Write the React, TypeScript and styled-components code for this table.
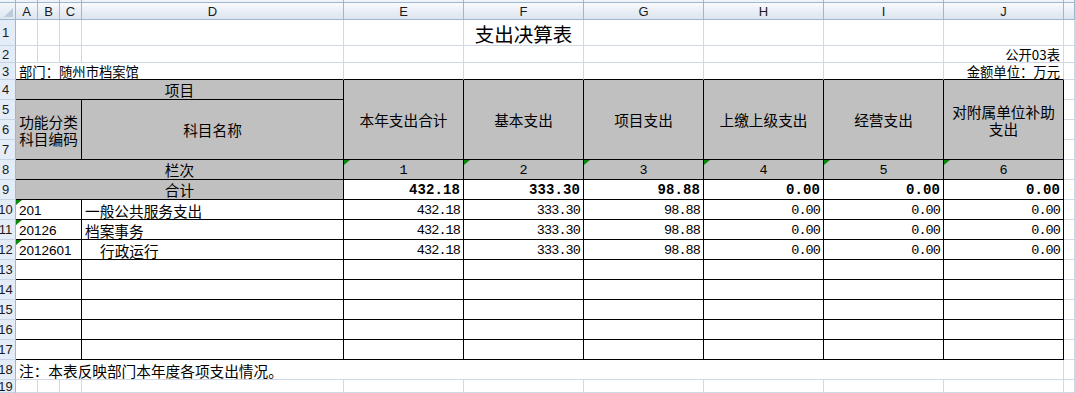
import React from 'react';
import styled, { createGlobalStyle, css } from 'styled-components';

const GRID = '#d0d7e5';
const BLACK = '#000000';
const HEADLINE = '#9eb6ce';
const CJK = `"Noto Sans CJK SC", "Noto Sans", sans-serif`;
const MONO = `"Liberation Mono", "DejaVu Sans Mono", monospace`;
const LATIN = `"Liberation Sans", Arial, sans-serif`;

const GlobalStyle = createGlobalStyle`
  html, body { margin: 0; padding: 0; background: #ffffff; }
  body { width: 1075px; height: 393px; overflow: hidden; }
`;

const Sheet = styled.div`
  display: grid;
  grid-template-columns: 16px 22px 22px 22px 262px repeat(6, 120px) 11px;
  grid-template-rows: 20px 26px 17px 17px repeat(15, 20px) 13px;
  width: 1075px;
  height: 393px;
  overflow: hidden;
  font-family: ${CJK};
  color: #000;
  background: #fff;
`;

const Corner = styled.div`
  grid-column: 1;
  grid-row: 1;
  box-sizing: border-box;
  border-right: 1px solid ${HEADLINE};
  border-bottom: 1px solid ${HEADLINE};
  background: linear-gradient(to bottom, #eef3f9 0, #eef3f9 2px, ${HEADLINE} 2px, ${HEADLINE} 3px, #f3f7fb 3px, #dde5ef 100%);
  display: flex;
`;

const ColHead = styled.div<{ $c: number }>`
  grid-column: ${(p) => p.$c};
  grid-row: 1;
  box-sizing: border-box;
  border-right: 1px solid ${HEADLINE};
  border-bottom: 1px solid ${HEADLINE};
  background: linear-gradient(to bottom, #eef3f9 0, #eef3f9 2px, ${HEADLINE} 2px, ${HEADLINE} 3px, #f8fafd 3px, #dce4ee 100%);
  display: flex;
  align-items: center;
  justify-content: center;
  padding-top: 3px;
  font: 13px ${LATIN};
  color: #1b1b1b;
  overflow: hidden;
`;

const RowHead = styled.div<{ $r: number }>`
  grid-column: 1;
  grid-row: ${(p) => p.$r};
  box-sizing: border-box;
  border-right: 1px solid ${HEADLINE};
  border-bottom: 1px solid #c5d3e4;
  background: #e4ecf7;
  display: flex;
  align-items: center;
  overflow: hidden;
  font: 13px ${LATIN};
  color: #1b1b1b;
`;

const RowNum = styled.span`
  flex: none;
  width: 21px;
  margin-left: -5px;
  text-align: center;
  line-height: 14px;
  padding-top: 1px;
`;

type CellProps = {
  $c: number;
  $r: number;
  $cs?: number;
  $rs?: number;
  $rb?: string;
  $bb?: string;
  $mark?: boolean;
};

const Cell = styled.div<CellProps>`
  grid-column: ${(p) => p.$c} / span ${(p) => p.$cs ?? 1};
  grid-row: ${(p) => p.$r} / span ${(p) => p.$rs ?? 1};
  box-sizing: border-box;
  border-right: 1px solid ${(p) => p.$rb ?? GRID};
  border-bottom: 1px solid ${(p) => p.$bb ?? GRID};
  position: relative;
  display: flex;
  align-items: center;
  min-width: 0;
  overflow: hidden;
  white-space: nowrap;
  ${(p) =>
    p.$mark &&
    css`
      &::before {
        content: '';
        position: absolute;
        left: 0;
        top: 0;
        width: 0;
        height: 0;
        border-style: solid;
        border-width: 5px 6px 0 0;
        border-color: #0a8a0a transparent transparent transparent;
      }
    `}
`;

const Blank = styled(Cell)``;

const Title = styled(Cell)`
  justify-content: center;
  font-size: 19.5px;
  line-height: 22px;
  padding-top: 2px;
`;

const Caption = styled(Cell)<{ $align?: 'left' | 'right' }>`
  justify-content: ${(p) => (p.$align === 'right' ? 'flex-end' : 'flex-start')};
  padding: 0 3px;
  font-size: 13.33px;
  line-height: 15px;
`;

const HeadCell = styled(Cell)`
  background: #c0c0c0;
  justify-content: center;
  text-align: center;
  white-space: normal;
  font-size: 14.67px;
  line-height: 17px;
`;

const HeadNum = styled(HeadCell)`
  font-family: ${MONO};
  font-size: 13.5px;
  padding-top: 2px;
`;

const NumCell = styled(Cell)<{ $bold?: boolean }>`
  justify-content: flex-end;
  padding: 2px 3px 0 0;
  font-family: ${MONO};
  font-size: ${(p) => (p.$bold ? '14px' : '13.5px')};
  font-weight: ${(p) => (p.$bold ? 700 : 400)};
  letter-spacing: ${(p) => (p.$bold ? '0.1px' : '-0.9px')};
  line-height: 17px;
`;

const CodeCell = styled(Cell)`
  padding: 2px 0 0 3px;
  font-family: ${LATIN};
  font-size: 13.5px;
  line-height: 17px;
`;

const NameCell = styled(Cell)<{ $indent?: number }>`
  padding: 1px 0 0 ${(p) => 3 + (p.$indent ?? 0)}px;
  font-size: 14.67px;
  line-height: 17px;
`;

const Note = styled(Cell)`
  padding: 1px 0 0 3px;
  font-size: 14.67px;
  line-height: 17px;
`;

const letters = ['A', 'B', 'C', 'D', 'E', 'F', 'G', 'H', 'I', 'J', ''];
const headTitles: React.ReactNode[] = [
  '本年支出合计',
  '基本支出',
  '项目支出',
  '上缴上级支出',
  '经营支出',
  <>
    对附属单位补助
    <br />
    支出
  </>,
];
const total = ['432.18', '333.30', '98.88', '0.00', '0.00', '0.00'];
const items = [
  { code: '201', name: '一般公共服务支出', indent: 0, values: total },
  { code: '20126', name: '档案事务', indent: 0, values: total },
  { code: '2012601', name: '行政运行', indent: 15, values: total },
];
const VALUE_COLS = [6, 7, 8, 9, 10, 11];

export default function App() {
  return (
    <>
      <GlobalStyle />
      <Sheet>
        <Corner>
          <svg width="15" height="19" viewBox="0 0 15 19">
            <polygon points="13,8 13,17 4,17" fill="#bccbdd" />
          </svg>
        </Corner>
        {letters.map((l, i) => (
          <ColHead key={`ch${i}`} $c={i + 2}>
            {l}
          </ColHead>
        ))}
        {Array.from({ length: 19 }, (_, i) => (
          <RowHead key={`rh${i}`} $r={i + 2}>
            <RowNum>{i + 1}</RowNum>
          </RowHead>
        ))}

        {/* Row 1 */}
        {[2, 3, 4, 5, 6].map((c) => (
          <Blank key={`r1-${c}`} $c={c} $r={2} />
        ))}
        <Title $c={7} $r={2}>支出决算表</Title>
        {[8, 9, 10, 11, 12].map((c) => (
          <Blank key={`r1-${c}`} $c={c} $r={2} />
        ))}

        {/* Row 2 */}
        {[2, 3, 4, 5, 6, 7, 8, 9, 10].map((c) => (
          <Blank key={`r2-${c}`} $c={c} $r={3} />
        ))}
        <Caption $c={11} $r={3} $align="right">
          公开03表
        </Caption>
        <Blank $c={12} $r={3} />

        {/* Row 3 */}
        <Caption $c={2} $cs={4} $r={4} $bb={BLACK}>
          部门：随州市档案馆
        </Caption>
        {[6, 7, 8, 9, 10].map((c) => (
          <Blank key={`r3-${c}`} $c={c} $r={4} $bb={BLACK} />
        ))}
        <Caption $c={11} $r={4} $bb={BLACK} $align="right">
          金额单位：万元
        </Caption>
        <Blank $c={12} $r={4} />

        {/* Rows 4-7 header */}
        <HeadCell $c={2} $cs={4} $r={5} $rb={BLACK} $bb={BLACK}>
          项目
        </HeadCell>
        {headTitles.map((t, i) => (
          <HeadCell key={`ht${i}`} $c={6 + i} $r={5} $rs={4} $rb={BLACK} $bb={BLACK}>
            {t}
          </HeadCell>
        ))}
        <HeadCell $c={2} $cs={3} $r={6} $rs={3} $rb={BLACK} $bb={BLACK}>
          功能分类
          <br />
          科目编码
        </HeadCell>
        <HeadCell $c={5} $r={6} $rs={3} $rb={BLACK} $bb={BLACK}>
          科目名称
        </HeadCell>

        {/* Row 8 */}
        <HeadCell $c={2} $cs={4} $r={9} $rb={BLACK} $bb={BLACK}>
          栏次
        </HeadCell>
        {VALUE_COLS.map((c, i) => (
          <HeadNum key={`ln${c}`} $c={c} $r={9} $rb={BLACK} $bb={BLACK} $mark>
            {i + 1}
          </HeadNum>
        ))}

        {/* Row 9 */}
        <HeadCell $c={2} $cs={4} $r={10} $rb={BLACK} $bb={BLACK}>
          合计
        </HeadCell>
        {VALUE_COLS.map((c, i) => (
          <NumCell key={`tot${c}`} $c={c} $r={10} $rb={BLACK} $bb={BLACK} $bold>
            {total[i]}
          </NumCell>
        ))}

        {/* Rows 10-12 */}
        {items.map((it, k) => (
          <React.Fragment key={it.code}>
            <CodeCell $c={2} $cs={3} $r={11 + k} $rb={BLACK} $bb={BLACK} $mark>
              {it.code}
            </CodeCell>
            <NameCell $c={5} $r={11 + k} $rb={BLACK} $bb={BLACK} $indent={it.indent}>
              {it.name}
            </NameCell>
            {VALUE_COLS.map((c, i) => (
              <NumCell key={`v${k}-${c}`} $c={c} $r={11 + k} $rb={BLACK} $bb={BLACK}>
                {it.values[i]}
              </NumCell>
            ))}
          </React.Fragment>
        ))}

        {/* Rows 13-17 empty */}
        {[14, 15, 16, 17, 18].map((r) => (
          <React.Fragment key={`e${r}`}>
            <Blank $c={2} $cs={3} $r={r} $rb={BLACK} $bb={BLACK} />
            <Blank $c={5} $r={r} $rb={BLACK} $bb={BLACK} />
            {VALUE_COLS.map((c) => (
              <Blank key={`e${r}-${c}`} $c={c} $r={r} $rb={BLACK} $bb={BLACK} />
            ))}
          </React.Fragment>
        ))}

        {/* K column rows 4-18 */}
        {Array.from({ length: 15 }, (_, i) => (
          <Blank key={`k${i}`} $c={12} $r={5 + i} />
        ))}

        {/* Row 18 */}
        <Note $c={2} $cs={10} $r={19}>
          注：本表反映部门本年度各项支出情况。
        </Note>

        {/* Row 19 */}
        {[2, 3, 4, 5, 6, 7, 8, 9, 10, 11, 12].map((c) => (
          <Blank key={`r19-${c}`} $c={c} $r={20} />
        ))}
      </Sheet>
    </>
  );
}
